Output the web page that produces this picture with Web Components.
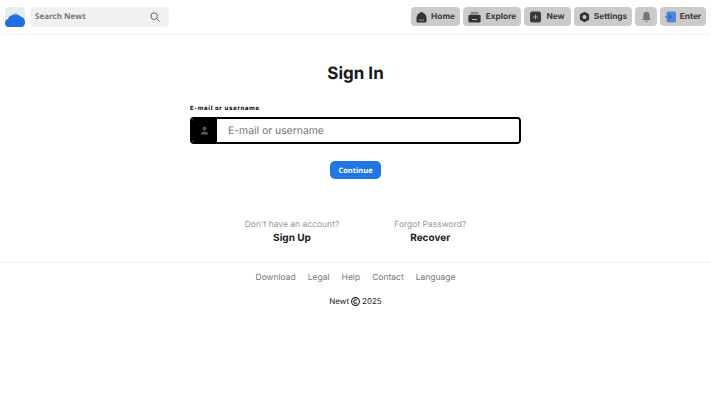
<!DOCTYPE html>
<html>
<head>
<meta charset="utf-8">
<title>Newt</title>
<style>
  html, body { margin: 0; padding: 0; background: #fff; font-family: "Inter", sans-serif; text-rendering: geometricPrecision; }
  body { height: 400px; overflow: hidden; }
</style>
</head>
<body>
<newt-header></newt-header>
<sign-in-form></sign-in-form>
<newt-footer></newt-footer>

<script>
class NavButton extends HTMLElement {
    connectedCallback() {
        this.shadowDOM = this.attachShadow({mode: "open"});
        this.shadowDOM.innerHTML = `
        <style>
            :host { display: flex; }
            .btn {
                display: flex;
                align-items: center;
                justify-content: center;
                gap: var(--gap, 4px);
                width: var(--w);
                height: 19px;
                box-sizing: border-box;
                background: #cbcbcb;
                border-radius: 4px;
                font: 700 8.300px "Inter", sans-serif;
                color: #3a3a3a;
            }
            ::slotted(svg) { display: block; width: 11px; height: 12px; }
        </style>
        <div class="btn"><slot name="icon"></slot><slot></slot></div>
        `;
    }
}

class NewtHeader extends HTMLElement {
    constructor() {
        super();
        this.shadowDOM = this.attachShadow({mode: "open"});
    }

    connectedCallback() {
        this.shadowDOM.innerHTML = `
        <style>
            :host {
                display: flex;
                align-items: center;
                justify-content: space-between;
                height: 33px;
                padding: 0 5px;
                box-shadow: 0 1px 3px rgba(0, 0, 0, 0.05);
            }
            .left { display: flex; align-items: center; gap: 5px; }
            .logo {
                width: 20px;
                height: 20px;
                background: #e9ebed;
                border-radius: 4px;
                display: flex;
            }
            .search {
                width: 139px;
                height: 20px;
                box-sizing: border-box;
                padding: 0 9px 0 5px;
                background: #f1f1f1;
                border-radius: 5px;
                display: flex;
                align-items: center;
                justify-content: space-between;
                font: 700 8px "Open Sans", sans-serif;
                color: #777;
            }
            .nav { display: flex; align-items: center; gap: 3px; }
        </style>
        <div class="left">
            <div class="logo">
                <svg width="20" height="20" viewBox="0 0 20 20">
                    <path d="M5 11l2.500-4.500 1.500 1 1.500-1.500 2 1 2.500 4z" fill="#6f9bdc"/>
                    <path d="M6.500 8l1-1.500.8.900zM10 7.500l.7-.6 1 .8z" fill="#fff"/>
                    <path transform="translate(0,-3) scale(1,1.150)" d="M3.500 20C1 20 0 18.300 0 16.500c0-1.900 1.300-3.200 3-3.400.6-1.900 2.200-3.100 4-3 1.200-1 3-1.100 4.500-.4 1.200-.5 3-.2 3.800 1.100C18 11 20 13.200 20 16c0 2.300-1.500 4-3.800 4z" fill="#1f6fe0"/>
                </svg>
            </div>
            <div class="search">
                <span>Search Newt</span>
                <svg width="10" height="10" viewBox="0 0 12 12" fill="none" stroke="#666" stroke-width="1.200">
                    <circle cx="5" cy="5" r="3.900"/>
                    <path d="M7.800 7.800l3.500 3.500" stroke-linecap="round"/>
                </svg>
            </div>
        </div>
        <div class="nav">
            <nav-button style="--w:49px">
                <svg slot="icon" viewBox="0 0 11 12"><path d="M5.500 .8l3.700 2.400 1.300 2.800v4.200a1.300 1.300 0 0 1-1.300 1.300H1.800A1.300 1.300 0 0 1 .5 10.200V6l1.300-2.800z" fill="#333"/><path d="M3 8.600c1.300 1 3.700 1 5 0" fill="none" stroke="#aaa" stroke-width=".9"/></svg>
                Home
            </nav-button>
            <nav-button style="--w:58px;--gap:5px">
                <svg slot="icon" viewBox="0 0 13 12" style="width:13px"><path d="M3 .8h7l1 3H2z" fill="#8a8a8a"/><path d="M1.200 4h10.600a.8.800 0 0 1 .8.800v5.400a1.200 1.200 0 0 1-1.200 1.200H1.600A1.200 1.200 0 0 1 .4 10.200V4.800A.8.800 0 0 1 1.200 4z" fill="#333"/><rect x="4" y="8" width="5" height="1" fill="#bbb"/></svg>
                Explore
            </nav-button>
            <nav-button style="--w:47px;--gap:5px">
                <svg slot="icon" viewBox="0 0 11 12"><rect x="0" y="0.500" width="11" height="11" rx="2.200" fill="#3a3a3a"/><path d="M5.500 3.800v4.400M3.300 6h4.400" stroke="#aaa" stroke-width="1"/></svg>
                New
            </nav-button>
            <nav-button style="--w:58px">
                <svg slot="icon" viewBox="0 0 11 12"><path fill-rule="evenodd" d="M5.500.7l4.600 2.600v5.400l-4.600 2.600L.9 8.700V3.300zM5.500 4a2 2 0 1 0 0 4 2 2 0 0 0 0-4z" fill="#333"/></svg>
                Settings
            </nav-button>
            <nav-button style="--w:22px;--gap:0">
                <svg slot="icon" viewBox="0 0 11 12"><path d="M5.500 .8c2.200 0 3.200 1.700 3.200 3.700v3l1.200 1.500H1.100l1.200-1.500v-3C2.300 2.500 3.300.8 5.500.8z" fill="#777"/><path d="M4 9.800h3L5.500 11.500z" fill="#777"/></svg>
            </nav-button>
            <nav-button style="--w:46px">
                <svg slot="icon" viewBox="0 0 11 12"><rect x="1.500" y="0.500" width="9.500" height="11" rx="2" fill="#4f86e0"/><path d="M0 6h5.800M4 3.800L6.400 6 4 8.200" fill="none" stroke="#2c62c0" stroke-width="1.100"/></svg>
                Enter
            </nav-button>
        </div>
        `;
    }
}

class SignInForm extends HTMLElement {
    constructor() {
        super();
        this.shadowDOM = this.attachShadow({mode: "open"});
    }

    connectedCallback() {
        this.shadowDOM.innerHTML = `
        <style>
            :host {
                display: flex;
                flex-direction: column;
                align-items: center;
                color: #1a1a1a;
            }
            h1 {
                margin: 29px 0 0;
                font: 700 17px/24px "Inter", sans-serif;
            }
            .field { width: 331px; margin-top: 18px; }
            label {
                display: block;
                font: 800 6px/10px "Inter", sans-serif;
                letter-spacing: 0.67px;
                color: #111;
                margin-bottom: 3px;
            }
            .input-row {
                display: flex;
                height: 27px;
                box-sizing: border-box;
                border: 2px solid #000;
                border-radius: 4px;
                overflow: hidden;
            }
            .input-icon {
                width: 25px;
                background: #000;
                display: flex;
                align-items: center;
                justify-content: center;
            }
            input {
                flex: 1;
                min-width: 0;
                border: 0;
                outline: 0;
                padding: 0 0 0 11px;
                font: 400 10.400px "Inter", sans-serif;
                color: #333;
                text-rendering: geometricPrecision;
            }
            input::placeholder { color: #777; opacity: 1; }
            button {
                margin-top: 17px;
                width: 51px;
                height: 18px;
                border: 0;
                border-radius: 5px;
                background: #2176e6;
                color: #fff;
                font: 700 7.500px "Open Sans", sans-serif;
                padding: 1px 0 0;
                text-rendering: geometricPrecision;
            }
            .links {
                display: flex;
                justify-content: center;
                gap: 55px;
                margin-top: 40px;
            }
            .link { text-align: center; }
            .link span {
                display: block;
                font: 400 8.500px/12px "Inter", sans-serif;
                color: #999;
            }
            .link b {
                display: block;
                font: 700 10px/14px "Inter", sans-serif;
                color: #222;
            }
        </style>
        <h1>Sign In</h1>
        <div class="field">
            <label>E-mail or username</label>
            <div class="input-row">
                <div class="input-icon">
                    <svg width="9" height="9" viewBox="0 0 9 9" fill="#555"><circle cx="4.500" cy="2.500" r="2"/><path d="M.8 8.500c0-2 1.700-3 3.700-3s3.700 1 3.700 3z"/></svg>
                </div>
                <input type="text" placeholder="E-mail or username">
            </div>
        </div>
        <button type="button">Continue</button>
        <div class="links">
            <div class="link"><span>Don't have an account?</span><b>Sign Up</b></div>
            <div class="link"><span>Forgot Password?</span><b>Recover</b></div>
        </div>
        `;
    }
}

class NewtFooter extends HTMLElement {
    constructor() {
        super();
        this.shadowDOM = this.attachShadow({mode: "open"});
    }

    connectedCallback() {
        this.shadowDOM.innerHTML = `
        <style>
            :host {
                display: block;
                margin-top: 17px;
                border-top: 1px solid #eeeeee;
            }
            .links {
                display: flex;
                justify-content: center;
                gap: 12px;
                margin-top: 9px;
                font: 400 8.500px/12px "Inter", sans-serif;
                color: #777;
            }
            .copy {
                display: flex;
                justify-content: center;
                align-items: center;
                gap: 2px;
                margin-top: 11px;
                font: 400 8px/12px "Inter", sans-serif;
                color: #222;
            }
        </style>
        <div class="links">
            <span>Download</span><span>Legal</span><span>Help</span><span>Contact</span><span>Language</span>
        </div>
        <div class="copy">
            <span>Newt</span>
            <svg width="9" height="9" viewBox="0 0 9 9" fill="none" stroke="#222" stroke-width="1.100"><circle cx="4.500" cy="4.500" r="3.900"/><path d="M6 3.400a1.800 1.800 0 1 0 0 2.200"/></svg>
            <span>2025</span>
        </div>
        `;
    }
}

customElements.define("nav-button", NavButton);
customElements.define("newt-header", NewtHeader);
customElements.define("sign-in-form", SignInForm);
customElements.define("newt-footer", NewtFooter);
</script>
</body>
</html>
